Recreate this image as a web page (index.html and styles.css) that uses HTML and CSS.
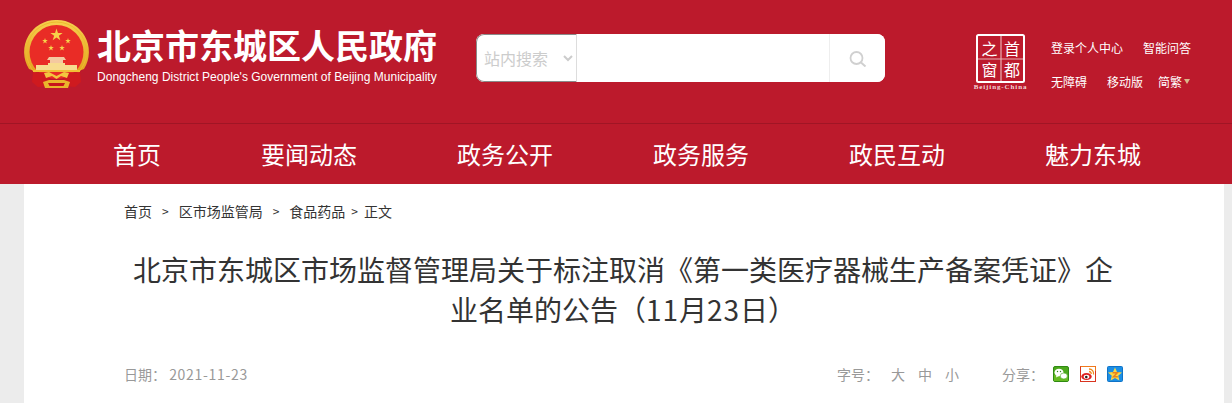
FILE: index.html
```html
<!DOCTYPE html>
<html lang="zh-CN">
<head>
<meta charset="utf-8">
<title>北京市东城区人民政府</title>
<link rel="stylesheet" href="styles.css">
</head>
<body>
<header class="top">
  <svg class="emblem" viewBox="0 0 66 70" aria-hidden="true">
    <defs>
      <polygon id="st" points="0,-1 .225,-.309 .951,-.309 .363,.118 .588,.809 0,.382 -.588,.809 -.363,.118 -.951,-.309 -.225,-.309"/>
      <linearGradient id="gold" x1="0" y1="0" x2="0" y2="1"><stop offset="0" stop-color="#f6d04e"/><stop offset="1" stop-color="#e3a31f"/></linearGradient>
    </defs>
    <path d="M32.500 0 A32 32 0 0 1 60 49 L52 52 H13 L5 49 A32 32 0 0 1 32.500 0 Z" fill="url(#gold)"/>
    <circle cx="32.500" cy="32" r="30" fill="none" stroke="#eeb92f" stroke-width="1"/>
    <circle cx="32.500" cy="32" r="27" fill="#e92c26"/>
    <g fill="#f7d24a">
      <use href="#st" transform="translate(32.500 15) scale(6.500)"/>
      <use href="#st" transform="translate(21 21) scale(3)"/>
      <use href="#st" transform="translate(44 21) scale(3)"/>
      <use href="#st" transform="translate(27 28) scale(3)"/>
      <use href="#st" transform="translate(38 28) scale(3)"/>
    </g>
    <path d="M25 37 H40 L42 40 H39 V43 H26 V40 H23 Z" fill="#f4c9a0"/>
    <path d="M24 43 H41 V45 H53 V50 H12 V45 H24 Z" fill="#f7dc8e"/>
    <path d="M9 52 L22 53 L27 62 L24 66 L14 67 L8 62 Z M56 52 L43 53 L38 62 L41 66 L51 67 L57 62 Z" fill="#cf1a1f"/>
    <path d="M9 50 H56 V52 H9 Z" fill="#f1bf36"/>
    <path d="M20 53 L25 52 L32.500 56 L40 52 L45 53 L43 58 L37 56 L32.500 59 L28 56 L22 58 Z" fill="#f3c63f"/>
    <path d="M19 62 L25 60 H40 L46 62 L44 68 H21 Z" fill="#eab52c"/>
    <path d="M24 63 H41 L39.500 66 H25.500 Z" fill="#c7161c"/>
  </svg>
  <div class="brand">
    <div class="brand-cn">北京市东城区人民政府</div>
    <div class="brand-en">Dongcheng District People's Government of Beijing Municipality</div>
  </div>
  <form class="search">
    <select class="scope"><option>站内搜索</option></select>
    <input class="query" type="text">
    <button class="go" type="button" aria-label="搜索">
      <svg width="18" height="16" viewBox="0 0 18 16" aria-hidden="true"><circle cx="7.500" cy="7" r="6" fill="none" stroke="#d0d0d0" stroke-width="1.800"/><path d="M12 11.500 L16.500 15.500" stroke="#d0d0d0" stroke-width="2"/></svg>
    </button>
  </form>
  <svg class="capital" viewBox="0 0 56 56" aria-hidden="true">
    <rect x="1" y="1" width="47" height="47" rx="1.500" fill="#bc1a2c" stroke="#fff" stroke-width="2"/>
    <path d="M25 2 V47 M2 25 H47" stroke="#eab0b4" stroke-width="1.200"/>
    <g class="capital-cn">
      <text x="13.500" y="20.500">之</text><text x="36" y="20.500">首</text>
      <text x="13.500" y="42">窗</text><text x="36" y="42">都</text>
    </g>
    <text class="capital-en" x="24.500" y="55">Beijing-China</text>
  </svg>
  <div class="links">
    <div class="link-row"><a class="w92">登录个人中心</a><a>智能问答</a></div>
    <div class="link-row"><a class="w56">无障碍</a><a class="w51">移动版</a><a>简繁</a><span class="caret"></span></div>
  </div>
</header>
<nav class="nav">
  <a>首页</a><a>要闻动态</a><a>政务公开</a><a>政务服务</a><a>政民互动</a><a>魅力东城</a>
</nav>
<main class="page">
  <div class="crumbs">
    <a>首页</a><span class="sep">&gt;</span><a>区市场监管局</a><span class="sep">&gt;</span><a>食品药品</a><span class="sep tight">&gt;</span><a>正文</a>
  </div>
  <h1 class="title">北京市东城区市场监督管理局关于标注取消《第一类医疗器械生产备案凭证》企业名单的公告（<span class="num">11</span>月<span class="num">23</span>日）</h1>
  <div class="meta">
    <span class="date">日期：&nbsp;<span class="date-num">2021-11-23</span></span>
    <div class="tools">
      <span class="label">字号：</span>
      <span class="sizes"><a>大</a><a>中</a><a>小</a></span>
      <span class="label share">分享：</span>
      <span class="icons">
        <svg class="ico" viewBox="0 0 16 16" aria-hidden="true"><rect x=".5" y=".5" width="15" height="15" rx="1.500" fill="#4ca81c" stroke="#2f8a12"/><rect x="1" y="9" width="14" height="6" fill="#66bb22"/><ellipse cx="6" cy="6.500" rx="4.500" ry="3.800" fill="#fff"/><path d="M3.500 9 L3 11.500 L6 10 Z" fill="#fff"/><ellipse cx="10.800" cy="10" rx="3.600" ry="3" fill="#fff" stroke="#4ca81c" stroke-width=".6"/><circle cx="4.500" cy="5.500" r=".7" fill="#2f8a12"/><circle cx="7.500" cy="5.500" r=".7" fill="#2f8a12"/></svg>
        <svg class="ico" viewBox="0 0 16 16" aria-hidden="true"><rect x=".5" y=".5" width="15" height="15" fill="#fff" stroke="#d9341f"/><path d="M.5 .5 H15.500 V5" fill="none" stroke="#f07a1c"/><ellipse cx="6.500" cy="10.500" rx="5.200" ry="3.600" fill="#dd2222"/><ellipse cx="6.500" cy="10.800" rx="2.800" ry="2" fill="#fff"/><circle cx="6.300" cy="11" r="1.300" fill="#222"/><path d="M9 3 A4.500 4.500 0 0 1 13.500 8.500 M9 5.500 A2.200 2.200 0 0 1 11.200 8" fill="none" stroke="#f08a1c" stroke-width="1.300"/></svg>
        <svg class="ico" viewBox="0 0 16 16" aria-hidden="true"><rect x=".5" y=".5" width="15" height="15" rx="1" fill="#1b8fe6" stroke="#0f72c6"/><polygon points="8,1.500 10,6 15,6.500 11.200,9.700 12.400,14.500 8,12 3.600,14.500 4.800,9.700 1,6.500 6,6" fill="#fbd746"/><path d="M5.500 6.800 H10.300 L6.500 10.800 H10.800" fill="none" stroke="#e8821e" stroke-width="1.500"/></svg>
      </span>
    </div>
  </div>
</main>
</body>
</html>
```
FILE: styles.css
```css
* { box-sizing: border-box; }
html, body { margin: 0; height: 403px; overflow: hidden; }
body { background: #ececec; font-family: "Noto Sans CJK SC", "Liberation Sans", sans-serif; color: #333; }
a { color: inherit; text-decoration: none; }

.top { height: 124px; background: #bc1a2c; border-bottom: 1px solid #a01525; display: flex; align-items: flex-start; padding-left: 24px; color: #fff; }
.emblem { width: 66px; height: 70px; margin-top: 20px; flex: none; }
.brand { width: 340px; margin-left: 7px; margin-top: 21px; flex: none; }
.brand-cn { font-size: 34px; line-height: 48px; font-weight: 700; white-space: nowrap; }
.brand-en { font-family: "Liberation Sans", sans-serif; font-size: 12px; line-height: 16px; white-space: nowrap; letter-spacing: .02px; }

.search { width: 409px; height: 48px; margin-left: 39px; margin-top: 34px; display: flex; flex: none; background: #fff; border-radius: 8px; overflow: hidden; }
.scope { width: 101px; height: 48px; flex: none; border: 1px solid #8a8a8a; border-right: 1px solid #ddd; border-radius: 8px 0 0 8px; background: #fff; color: #ccc; font: 16px "Noto Sans CJK SC", sans-serif; padding-left: 3px; outline: 0; }
.query { flex: 1; min-width: 0; border: 0; outline: 0; background: #fff; }
.go { width: 56px; flex: none; border: 0; border-left: 1px solid #eee; background: #fff; padding: 2px 0 0 0; display: flex; align-items: center; justify-content: center; }

.capital { width: 56px; height: 56px; margin-left: 91px; margin-top: 34px; flex: none; overflow: visible; }
.capital-cn text { font-size: 16px; fill: #fff; text-anchor: middle; font-family: "Noto Sans CJK SC", sans-serif; }
.capital-en { font: 700 7px "Liberation Serif", serif; fill: #f3d6d8; text-anchor: middle; letter-spacing: .9px; }

.links { margin-left: 19px; margin-top: 31px; font-size: 12px; flex: none; }
.link-row { display: flex; align-items: center; height: 34px; line-height: 34px; white-space: nowrap; }
.w92 { width: 92px; }
.w56 { width: 56px; }
.w51 { width: 51px; }
.caret { width: 0; height: 0; margin-left: 2px; margin-top: -1px; border: 3px solid transparent; border-top: 5px solid #d9b98a; border-bottom: 0; }

.nav { height: 60px; background: #bc1a2c; display: flex; gap: 100px; padding-left: 113px; color: #fff; font-size: 24px; line-height: 60px; white-space: nowrap; }

.page { width: 1200px; margin-left: 24px; height: 219px; background: #fff; padding: 0 100px; }
.crumbs { padding-top: 17px; height: 62px; font-size: 14px; line-height: 20px; color: #333; display: flex; white-space: nowrap; }
.sep { margin: 0 10px; font-size: 12px; }
.sep.tight { margin: 0 6px; }
.title { margin: 3px 0 0; padding-right: 2px; font-size: 28px; font-weight: 400; line-height: 40px; text-align: center; color: #333; }
.num { letter-spacing: 1px; }
.meta { display: flex; align-items: center; justify-content: space-between; margin-top: 33px; height: 24px; padding-right: 1px; font-size: 14px; color: #999; white-space: nowrap; }
.date-num { letter-spacing: .7px; }
.tools { display: flex; align-items: center; }
.sizes { display: flex; gap: 13px; margin-left: 12px; }
.share { margin-left: 43px; }
.icons { display: flex; gap: 11px; margin-left: 9px; }
.ico { width: 16px; height: 16px; display: block; }
```
